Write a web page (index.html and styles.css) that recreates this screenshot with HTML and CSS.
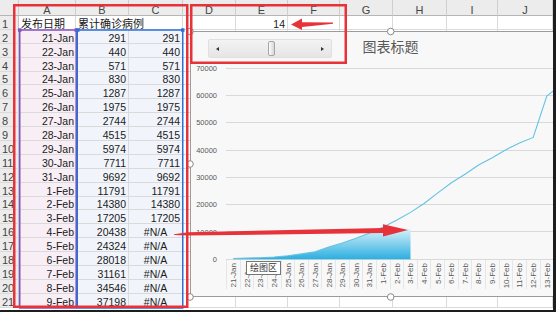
FILE: index.html
```html
<!DOCTYPE html>
<html lang="zh-CN">
  <head>
    <meta charset="UTF-8" />
    <meta name="viewport" content="width=device-width, initial-scale=1.0" />
    <title>动态图表</title>
    <link rel="stylesheet" href="styles.css">
  </head>
  <body>
    <div class="screen">
      <table class="sheet">
        <colgroup>
          <col style="width:19px"><col style="width:57px"><col style="width:53px"><col style="width:54px">
          <col style="width:53px"><col style="width:52px"><col style="width:52px"><col style="width:53px">
          <col style="width:54px"><col style="width:51px"><col style="width:55px">
        </colgroup>
        <thead>
          <tr><th></th><th>A</th><th>B</th><th>C</th><th>D</th><th>E</th><th>F</th><th>G</th><th>H</th><th>I</th><th>J</th></tr>
        </thead>
        <tbody>
          <tr><th>1</th><td class="label">发布日期</td><td class="label spill">累计确诊病例</td><td></td><td></td><td class="num">14</td><td></td><td></td><td></td><td></td><td></td></tr>
          <tr><th>2</th><td class="cat">21-Jan</td><td class="val">291</td><td class="val">291</td><td></td><td></td><td></td><td></td><td></td><td></td><td></td></tr>
          <tr><th>3</th><td class="cat">22-Jan</td><td class="val">440</td><td class="val">440</td><td></td><td></td><td></td><td></td><td></td><td></td><td></td></tr>
          <tr><th>4</th><td class="cat">23-Jan</td><td class="val">571</td><td class="val">571</td><td></td><td></td><td></td><td></td><td></td><td></td><td></td></tr>
          <tr><th>5</th><td class="cat">24-Jan</td><td class="val">830</td><td class="val">830</td><td></td><td></td><td></td><td></td><td></td><td></td><td></td></tr>
          <tr><th>6</th><td class="cat">25-Jan</td><td class="val">1287</td><td class="val">1287</td><td></td><td></td><td></td><td></td><td></td><td></td><td></td></tr>
          <tr><th>7</th><td class="cat">26-Jan</td><td class="val">1975</td><td class="val">1975</td><td></td><td></td><td></td><td></td><td></td><td></td><td></td></tr>
          <tr><th>8</th><td class="cat">27-Jan</td><td class="val">2744</td><td class="val">2744</td><td></td><td></td><td></td><td></td><td></td><td></td><td></td></tr>
          <tr><th>9</th><td class="cat">28-Jan</td><td class="val">4515</td><td class="val">4515</td><td></td><td></td><td></td><td></td><td></td><td></td><td></td></tr>
          <tr><th>10</th><td class="cat">29-Jan</td><td class="val">5974</td><td class="val">5974</td><td></td><td></td><td></td><td></td><td></td><td></td><td></td></tr>
          <tr><th>11</th><td class="cat">30-Jan</td><td class="val">7711</td><td class="val">7711</td><td></td><td></td><td></td><td></td><td></td><td></td><td></td></tr>
          <tr><th>12</th><td class="cat">31-Jan</td><td class="val">9692</td><td class="val">9692</td><td></td><td></td><td></td><td></td><td></td><td></td><td></td></tr>
          <tr><th>13</th><td class="cat">1-Feb</td><td class="val">11791</td><td class="val">11791</td><td></td><td></td><td></td><td></td><td></td><td></td><td></td></tr>
          <tr><th>14</th><td class="cat">2-Feb</td><td class="val">14380</td><td class="val">14380</td><td></td><td></td><td></td><td></td><td></td><td></td><td></td></tr>
          <tr><th>15</th><td class="cat">3-Feb</td><td class="val">17205</td><td class="val">17205</td><td></td><td></td><td></td><td></td><td></td><td></td><td></td></tr>
          <tr><th>16</th><td class="cat">4-Feb</td><td class="val">20438</td><td class="val na">#N/A</td><td></td><td></td><td></td><td></td><td></td><td></td><td></td></tr>
          <tr><th>17</th><td class="cat">5-Feb</td><td class="val">24324</td><td class="val na">#N/A</td><td></td><td></td><td></td><td></td><td></td><td></td><td></td></tr>
          <tr><th>18</th><td class="cat">6-Feb</td><td class="val">28018</td><td class="val na">#N/A</td><td></td><td></td><td></td><td></td><td></td><td></td><td></td></tr>
          <tr><th>19</th><td class="cat">7-Feb</td><td class="val">31161</td><td class="val na">#N/A</td><td></td><td></td><td></td><td></td><td></td><td></td><td></td></tr>
          <tr><th>20</th><td class="cat">8-Feb</td><td class="val">34546</td><td class="val na">#N/A</td><td></td><td></td><td></td><td></td><td></td><td></td><td></td></tr>
          <tr><th>21</th><td class="cat">9-Feb</td><td class="val">37198</td><td class="val na">#N/A</td><td></td><td></td><td></td><td></td><td></td><td></td><td></td></tr>
        </tbody>
      </table>

      <!-- chart object, drawn in sheet coordinates -->
      <svg class="chart" viewBox="190 31 402 266" width="402" height="266">
        <defs>
          <linearGradient id="areaFill" gradientUnits="userSpaceOnUse" x1="0" y1="229" x2="0" y2="259.5">
            <stop offset="0" stop-color="#d6f0fa" />
            <stop offset="1" stop-color="#2aaee0" />
          </linearGradient>
        </defs>
        <rect x="190.5" y="31.5" width="401" height="265" fill="#f8f8f8" stroke="#9b9b9b" />
        <text class="chart-title" x="390.5" y="52" text-anchor="middle">图表标题</text>

        <g stroke="#d9d9d9" stroke-width="1">
          <line x1="226" y1="68.5" x2="592" y2="68.5" />
          <line x1="226" y1="95.5" x2="592" y2="95.5" />
          <line x1="226" y1="122.5" x2="592" y2="122.5" />
          <line x1="226" y1="150.5" x2="592" y2="150.5" />
          <line x1="226" y1="177.5" x2="592" y2="177.5" />
          <line x1="226" y1="204.5" x2="592" y2="204.5" />
          <line x1="226" y1="231.5" x2="592" y2="231.5" />
          <line x1="226" y1="259.5" x2="592" y2="259.5" />
        </g>

        <g stroke="#e6e6e6" stroke-width="1">
          <line x1="226.5" y1="260" x2="226.5" y2="289" /><line x1="240.5" y1="260" x2="240.5" y2="289" />
          <line x1="253.5" y1="260" x2="253.5" y2="289" /><line x1="267.5" y1="260" x2="267.5" y2="289" />
          <line x1="281.5" y1="260" x2="281.5" y2="289" /><line x1="294.5" y1="260" x2="294.5" y2="289" />
          <line x1="308.5" y1="260" x2="308.5" y2="289" /><line x1="321.5" y1="260" x2="321.5" y2="289" />
          <line x1="335.5" y1="260" x2="335.5" y2="289" /><line x1="349.5" y1="260" x2="349.5" y2="289" />
          <line x1="362.5" y1="260" x2="362.5" y2="289" /><line x1="376.5" y1="260" x2="376.5" y2="289" />
          <line x1="390.5" y1="260" x2="390.5" y2="289" /><line x1="403.5" y1="260" x2="403.5" y2="289" />
          <line x1="417.5" y1="260" x2="417.5" y2="289" /><line x1="430.5" y1="260" x2="430.5" y2="289" />
          <line x1="444.5" y1="260" x2="444.5" y2="289" /><line x1="458.5" y1="260" x2="458.5" y2="289" />
          <line x1="471.5" y1="260" x2="471.5" y2="289" /><line x1="485.5" y1="260" x2="485.5" y2="289" />
          <line x1="499.5" y1="260" x2="499.5" y2="289" /><line x1="512.5" y1="260" x2="512.5" y2="289" />
          <line x1="526.5" y1="260" x2="526.5" y2="289" /><line x1="540.5" y1="260" x2="540.5" y2="289" />
        </g>

        <g class="axis-label" text-anchor="end">
          <text x="217" y="71">70000</text>
          <text x="217" y="98.2">60000</text>
          <text x="217" y="125.4">50000</text>
          <text x="217" y="152.7">40000</text>
          <text x="217" y="180">30000</text>
          <text x="217" y="207.3">20000</text>
          <text x="217" y="234.6">10000</text>
          <text x="217" y="262">0</text>
        </g>

        <polygon fill="url(#areaFill)"
          points="233.3,259.3 233.3,258.5 246.9,258.1 260.6,257.7 274.2,257 287.8,255.8 301.5,253.9 315.1,251.8 328.7,247 342.3,243 356,238.3 369.6,232.9 383.2,230.8 396.9,230 410.5,229.3 410.5,259.3" />
        <polyline fill="none" stroke="#62c3e3" stroke-width="1.1"
          points="233.3,258.5 246.9,258.1 260.6,257.7 274.2,257 287.8,255.8 301.5,253.9 315.1,251.8 328.7,247 342.3,243 356,238.3 369.6,232.9 383.2,227.1 396.9,220.1 410.5,212.4 424.1,203.5 437.8,192.9 451.4,182.8 465,174.3 478.6,165 492.3,157.8 505.9,149.7 519.5,142.9 533.2,137.4 546.8,96.1 560.4,85.1" />

        <g class="axis-label cat" text-anchor="end">
          <text x="236.1" y="263" transform="rotate(-90 236.1 263)">21-Jan</text>
          <text x="249.7" y="263" transform="rotate(-90 249.7 263)">22-Jan</text>
          <text x="263.4" y="263" transform="rotate(-90 263.4 263)">23-Jan</text>
          <text x="277" y="263" transform="rotate(-90 277 263)">24-Jan</text>
          <text x="290.6" y="263" transform="rotate(-90 290.6 263)">25-Jan</text>
          <text x="304.3" y="263" transform="rotate(-90 304.3 263)">26-Jan</text>
          <text x="317.9" y="263" transform="rotate(-90 317.9 263)">27-Jan</text>
          <text x="331.5" y="263" transform="rotate(-90 331.5 263)">28-Jan</text>
          <text x="345.1" y="263" transform="rotate(-90 345.1 263)">29-Jan</text>
          <text x="358.8" y="263" transform="rotate(-90 358.8 263)">30-Jan</text>
          <text x="372.4" y="263" transform="rotate(-90 372.4 263)">31-Jan</text>
          <text x="386" y="263" transform="rotate(-90 386 263)">1-Feb</text>
          <text x="399.7" y="263" transform="rotate(-90 399.7 263)">2-Feb</text>
          <text x="413.3" y="263" transform="rotate(-90 413.3 263)">3-Feb</text>
          <text x="426.9" y="263" transform="rotate(-90 426.9 263)">4-Feb</text>
          <text x="440.6" y="263" transform="rotate(-90 440.6 263)">5-Feb</text>
          <text x="454.2" y="263" transform="rotate(-90 454.2 263)">6-Feb</text>
          <text x="467.8" y="263" transform="rotate(-90 467.8 263)">7-Feb</text>
          <text x="481.4" y="263" transform="rotate(-90 481.4 263)">8-Feb</text>
          <text x="495.1" y="263" transform="rotate(-90 495.1 263)">9-Feb</text>
          <text x="508.7" y="263" transform="rotate(-90 508.7 263)">10-Feb</text>
          <text x="522.3" y="263" transform="rotate(-90 522.3 263)">11-Feb</text>
          <text x="536" y="263" transform="rotate(-90 536 263)">12-Feb</text>
          <text x="549.6" y="263" transform="rotate(-90 549.6 263)">13-Feb</text>
        </g>
      </svg>

      <div class="scroll">
        <span class="arrow-left"></span>
        <span class="thumb"></span>
        <span class="arrow-right"></span>
      </div>

      <div class="tip">绘图区</div>

      <!-- selection outlines, chart handles and red annotations -->
      <svg class="overlay" viewBox="0 0 553 310" width="553" height="310">
        <rect x="19.75" y="30" width="56.5" height="278" fill="none" stroke="#8352c4" stroke-width="1.5" />
        <rect x="77.25" y="30" width="105.5" height="278" fill="none" stroke="#2e6fd7" stroke-width="1.5" />
        <rect x="18" y="28.3" width="3.5" height="3.5" fill="#8352c4" />
        <rect x="74.5" y="28.3" width="3.5" height="3.5" fill="#8352c4" />
        <rect x="76" y="28.3" width="3.5" height="3.5" fill="#2e6fd7" />
        <rect x="181" y="28.3" width="3.5" height="3.5" fill="#2e6fd7" />

        <g fill="#fff" stroke="#8a8a8a" stroke-width="1">
          <circle cx="190" cy="31.5" r="3.3" />
          <circle cx="390.7" cy="31.5" r="3.3" />
          <circle cx="190" cy="164" r="3.3" />
          <circle cx="190" cy="297" r="3.3" />
          <circle cx="390.7" cy="297" r="3.3" />
        </g>

        <g fill="none" stroke="#e8323a" stroke-width="2.5">
          <rect x="14.25" y="5.25" width="173" height="301.5" />
          <rect x="191.25" y="5.25" width="154.5" height="57.5" />
        </g>
        <g fill="#e8323a">
          <polygon points="174,234.2 188,232.3 383,228 383,224.3 408,230 383,236.5 383,233 188,235.5 174,235" />
          <polygon points="302,22.3 333,22.6 333,23.8 302,27 302,30 291,24.5 302,18.5" />
        </g>
      </svg>
    </div>
  </body>
</html>
```

FILE: styles.css
```css
body {
  margin: 0;
  background-color: #1d1d1d;
  font-family: "Liberation Sans", "Noto Sans CJK SC", sans-serif;
}
.screen {
  position: relative;
  width: 553px;
  height: 310px;
  overflow: hidden;
  background-color: #fff;
}
.sheet {
  border-collapse: separate;
  border-spacing: 0;
  table-layout: fixed;
  width: 553px;
  font-size: 10.5px;
  color: #1a1a1a;
}
.sheet tbody tr {
  height: 13.9px;
}
.sheet thead tr {
  height: 16px;
}
.sheet th,
.sheet td {
  padding: 0 2px;
  border-right: 1px solid #dadada;
  border-bottom: 1px solid #dadada;
  white-space: nowrap;
  line-height: 9px;
  font-weight: normal;
  vertical-align: bottom;
  overflow: visible;
}
.sheet thead th {
  background-color: #ececec;
  color: #444;
  font-size: 11px;
  text-align: center;
  border-right-color: #cfcfcf;
  border-bottom-color: #b5b5b5;
}
.sheet tbody th {
  background-color: #ececec;
  color: #444;
  font-size: 11px;
  text-align: left;
  padding-left: 2px;
  border-right-color: #c4c4c4;
}
.sheet .label {
  font-size: 11px;
  text-align: left;
}
.sheet .spill {
  border-right-color: transparent;
}
.sheet .num {
  text-align: right;
}
.sheet .cat {
  background-color: #f8eef5;
  text-align: right;
  padding-right: 1px;
}
.sheet .val {
  background-color: #f1f5fb;
  text-align: right;
  padding-right: 2px;
}
.sheet .na {
  text-align: center;
}

.chart {
  position: absolute;
  left: 190px;
  top: 31px;
}
.chart-title {
  font-size: 14px;
  fill: #595959;
}
.axis-label {
  font-size: 7.5px;
  fill: #595959;
}
.axis-label.cat {
  font-size: 8px;
}

.scroll {
  position: absolute;
  left: 208px;
  top: 39px;
  width: 124px;
  height: 19px;
  box-sizing: border-box;
  padding: 0 7px;
  border: 1px solid #e0e0e0;
  border-radius: 2px;
  background: linear-gradient(#f3f3f3, #e5e5e5);
  display: flex;
  align-items: center;
  justify-content: space-between;
}
.arrow-left {
  border-top: 2.5px solid transparent;
  border-bottom: 2.5px solid transparent;
  border-right: 3px solid #333;
}
.arrow-right {
  border-top: 2.5px solid transparent;
  border-bottom: 2.5px solid transparent;
  border-left: 3px solid #333;
}
.thumb {
  position: absolute;
  left: 59px;
  top: 1px;
  width: 7px;
  height: 15px;
  box-sizing: border-box;
  border: 1px solid #a5a5a5;
  border-radius: 2px;
  background: linear-gradient(to right, #fdfdfd, #d6d6d6);
}

.tip {
  position: absolute;
  left: 246px;
  top: 261px;
  width: 35px;
  height: 14px;
  box-sizing: border-box;
  border: 1px solid #767676;
  background-color: #fff;
  color: #333;
  font-size: 9px;
  line-height: 12px;
  text-align: center;
}

.overlay {
  position: absolute;
  left: 0;
  top: 0;
  pointer-events: none;
}
```
